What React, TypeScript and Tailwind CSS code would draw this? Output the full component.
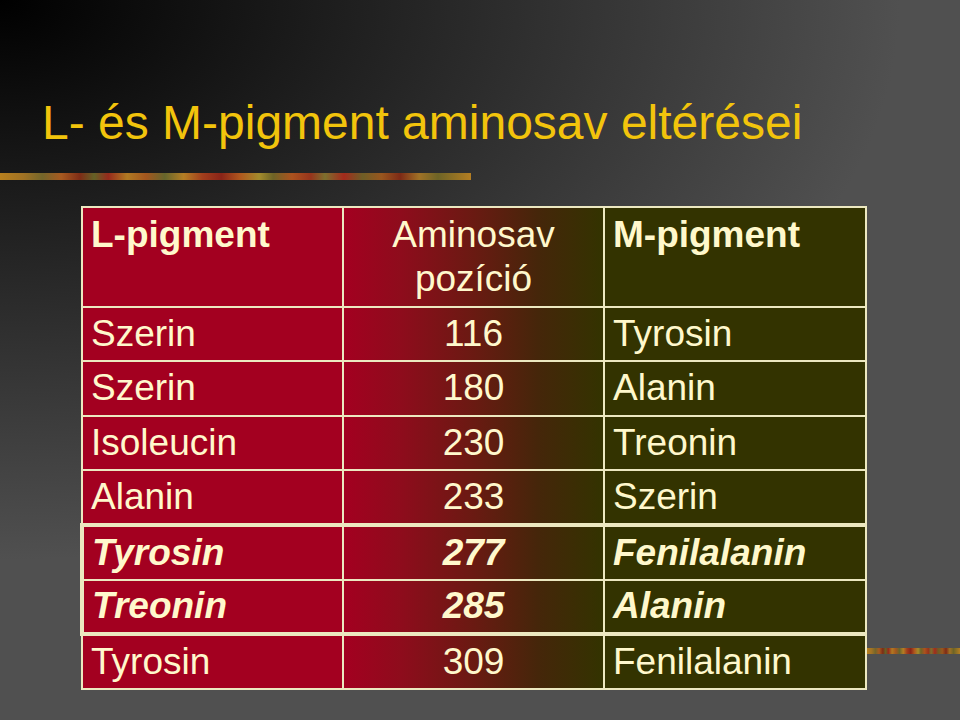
import React from 'react';

type Row = {
  l: string;
  pos: string;
  m: string;
  emphasis?: boolean;
};

const rows: Row[] = [
  { l: 'Szerin', pos: '116', m: 'Tyrosin' },
  { l: 'Szerin', pos: '180', m: 'Alanin' },
  { l: 'Isoleucin', pos: '230', m: 'Treonin' },
  { l: 'Alanin', pos: '233', m: 'Szerin' },
  { l: 'Tyrosin', pos: '277', m: 'Fenilalanin', emphasis: true },
  { l: 'Treonin', pos: '285', m: 'Alanin', emphasis: true },
  { l: 'Tyrosin', pos: '309', m: 'Fenilalanin' },
];

const stripe =
  'bg-[linear-gradient(90deg,#b8801e_0%,#a07224_5%,#74662a_9%,#a85a20_13%,#7e2c16_17%,#646226_20%,#962a1c_23%,#b07a22_27%,#a4561e_31%,#66662c_35%,#b47e24_39%,#a23e1c_43%,#8a2418_47%,#b0581e_51%,#a48c2c_55%,#6e6426_58%,#ac521e_62%,#96341c_66%,#7c702e_69%,#a42a1c_73%,#6e5e26_77%,#98561e_81%,#7e2a16_85%,#a07226_89%,#6e6426_93%,#b47e22_100%)]';

const midBg = 'bg-[linear-gradient(90deg,#a30020_0%,#8e0c1c_22%,#6a1a12_50%,#45260a_75%,#333300_100%)]';

function Cell({
  children,
  className = '',
}: {
  children: React.ReactNode;
  className?: string;
}) {
  return (
    <td className={`border-2 border-[#ece8c0] px-[8px] ${className}`}>{children}</td>
  );
}

export default function App() {
  return (
    <div className="relative h-[720px] w-[960px] overflow-hidden bg-[#505050] bg-[radial-gradient(ellipse_900px_560px_at_0_0,#000000_0%,#505050_100%)] font-['Liberation_Sans',Arial,sans-serif]">
      <h1 className="pl-[42px] pt-[94px] text-[48px] font-normal leading-[1.2] text-[#f2c40c]">
        L- és M-pigment aminosav eltérései
      </h1>
      <div className={`mt-[21px] h-[7px] w-[471px] ${stripe}`} />

      <div className="mt-[26px] flex items-start">
        <div className="w-[80px] shrink-0" />
        <table className="w-[784px] shrink-0 table-fixed border-collapse text-[37px] leading-[1.2] text-[#fff8cc]">
          <colgroup>
            <col className="w-[261px]" />
            <col className="w-[261px]" />
            <col className="w-[262px]" />
          </colgroup>
          <thead>
            <tr className="h-[100px]">
              <Cell className="bg-[#a30020] pt-[5px] text-left align-top font-bold">L-pigment</Cell>
              <Cell className={`${midBg} pt-[5px] text-center align-top font-normal`}>
                Aminosav
                <br />
                pozíció
              </Cell>
              <Cell className="bg-[#333300] pt-[5px] text-left align-top font-bold">M-pigment</Cell>
            </tr>
          </thead>
          <tbody>
            {rows.map((r, i) => {
              const em = r.emphasis ? 'font-bold italic' : '';
              const top = r.emphasis && !rows[i - 1]?.emphasis ? 'border-t-4' : '';
              const bottom = r.emphasis && !rows[i + 1]?.emphasis ? 'border-b-4' : '';
              const edge = `${top} ${bottom}`;
              return (
                <tr key={i} className="h-[54.6px]">
                  <Cell className={`bg-[#a30020] align-middle ${em} ${edge} ${r.emphasis ? 'border-l-4' : ''}`}>
                    {r.l}
                  </Cell>
                  <Cell className={`${midBg} text-center align-middle ${em} ${edge}`}>{r.pos}</Cell>
                  <Cell className={`bg-[#333300] align-middle ${em} ${edge}`}>{r.m}</Cell>
                </tr>
              );
            })}
          </tbody>
        </table>
        <div className="flex-1 pt-[442px]">
          <div className={`h-[6px] w-full ${stripe}`} />
        </div>
      </div>
    </div>
  );
}
